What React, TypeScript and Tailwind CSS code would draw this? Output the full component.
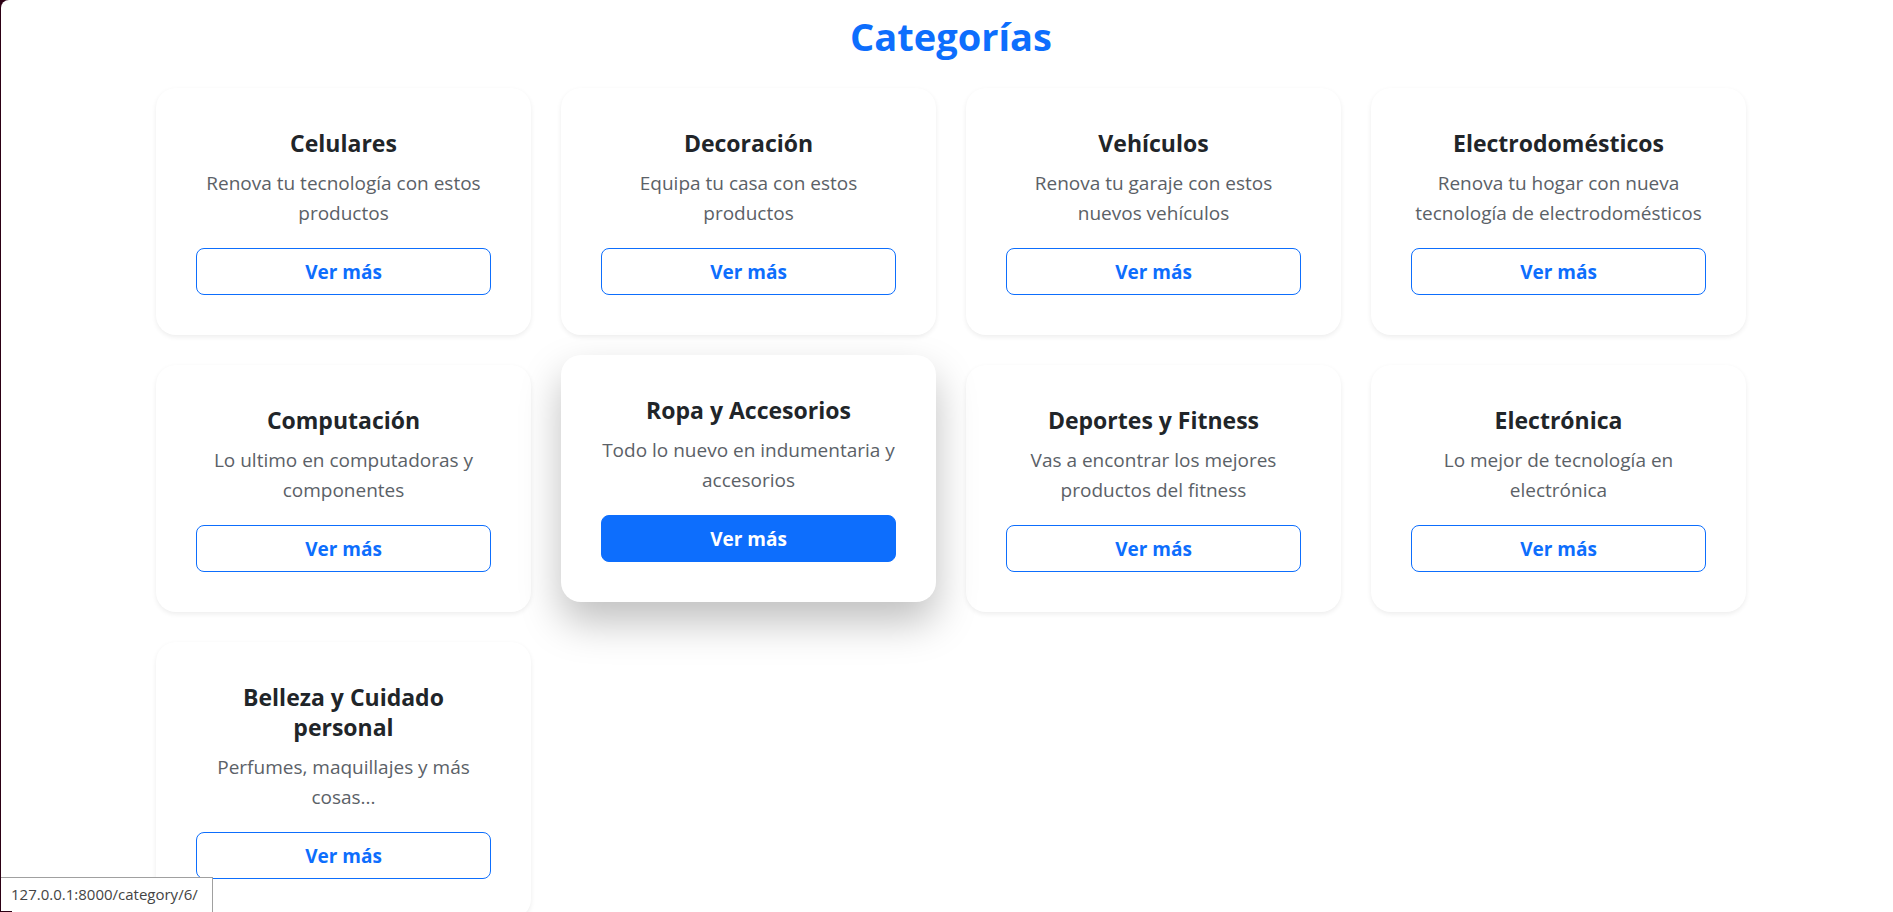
type Category = {
  id: number;
  title: string;
  description: string;
};

const categories: Category[] = [
  { id: 1, title: "Celulares", description: "Renova tu tecnología con estos productos" },
  { id: 2, title: "Decoración", description: "Equipa tu casa con estos productos" },
  { id: 3, title: "Vehículos", description: "Renova tu garaje con estos nuevos vehículos" },
  { id: 4, title: "Electrodomésticos", description: "Renova tu hogar con nueva tecnología de electrodomésticos" },
  { id: 5, title: "Computación", description: "Lo ultimo en computadoras y componentes" },
  { id: 6, title: "Ropa y Accesorios", description: "Todo lo nuevo en indumentaria y accesorios" },
  { id: 7, title: "Deportes y Fitness", description: "Vas a encontrar los mejores productos del fitness" },
  { id: 8, title: "Electrónica", description: "Lo mejor de tecnología en electrónica" },
  { id: 9, title: "Belleza y Cuidado personal", description: "Perfumes, maquillajes y más cosas..." },
];

const activeId = 6;

function CategoryCard({ category, active }: { category: Category; active: boolean }) {
  return (
    <article
      className={
        "flex flex-col rounded-[20px] bg-white p-10 text-center " +
        (active
          ? "z-10 -translate-y-[10px] shadow-[0_20px_40px_rgba(0,0,0,0.25)]"
          : "shadow-[0_2px_5px_rgba(0,0,0,0.075)]")
      }
    >
      <h2 className="mb-[10px] text-[23px] leading-[30px] font-bold text-[#212529]">{category.title}</h2>
      <p className="mb-5 text-[19px] leading-[30px] text-[#5b6167]">{category.description}</p>
      <a
        href={`/category/${category.id}/`}
        className={
          "mt-auto block rounded-lg border border-[#0d6efd] pt-2 pb-[6px] text-[19px] leading-[31px] font-bold " +
          (active ? "bg-[#0d6efd] text-white" : "text-[#0d6efd]")
        }
      >
        Ver más
      </a>
    </article>
  );
}

export default function App() {
  return (
    <div className="h-screen bg-[#2c0014] pl-px font-['Open_Sans','Noto_Sans',sans-serif]">
      <main className="h-full overflow-y-auto rounded-tl-lg bg-white pt-3 pb-10 pl-2 [scrollbar-width:none]">
        <div className="mx-auto max-w-[1590px]">
          <h1 className="mb-7 text-center text-[38px] leading-[48px] font-bold text-[#0d6efd]">
            Categorías
          </h1>
          <div className="grid grid-cols-1 gap-[30px] sm:grid-cols-2 xl:grid-cols-4">
            {categories.map((category) => (
              <CategoryCard key={category.id} category={category} active={category.id === activeId} />
            ))}
          </div>
        </div>
      </main>
      <div className="fixed bottom-0 left-px z-20 border-t border-r border-[#a0a0a0] bg-white pt-px pr-[14px] pb-[3px] pl-[10px] text-[15px] leading-[30px] text-[#444]">
        127.0.0.1:8000/category/{activeId}/
      </div>
      <div className="fixed bottom-0 left-0 z-30 h-px w-3 bg-[#2c0014]" />
    </div>
  );
}
